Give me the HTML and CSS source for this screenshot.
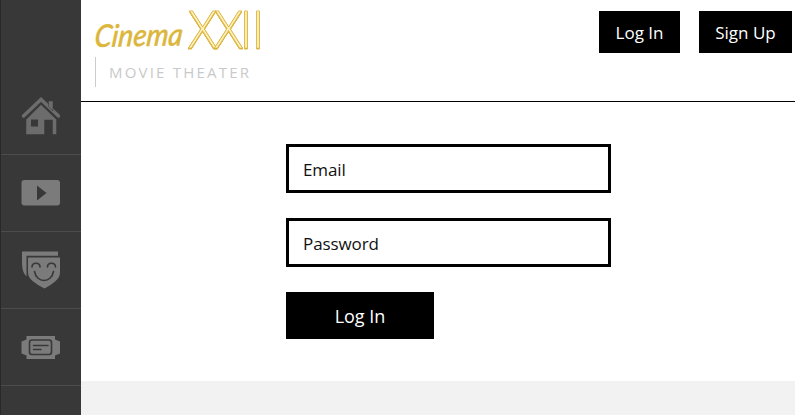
FILE: index.html
```html
<!DOCTYPE html>
<html lang="en">
<head>
<meta charset="utf-8">
<title>Cinema XXII</title>
<link rel="stylesheet" href="styles.css">
</head>
<body>
<nav class="sidebar">
  <a class="nav-item home" aria-label="Home"><svg width="40" height="40" viewBox="0 0 40 40"><path class="roof" d="M2.500 20 20 3.500 37.500 20"/><path class="shape" d="M27.500 5h4.500v10l-4.500-4.500ZM20 8.500l15.500 15v15h-4V24h-8v14.500H5v-15Z"/><path class="hole" d="M10 23.500h7v7h-7z"/></svg></a>
  <a class="nav-item" aria-label="Movies"><svg width="40" height="40" viewBox="0 0 40 40"><rect class="shape" x=".5" y="7" width="38.500" height="25.500" rx="3"/><path class="hole" d="m16 12.500 9.500 7.500-9.500 7.500Z"/></svg></a>
  <a class="nav-item" aria-label="Plays"><svg width="40" height="40" viewBox="-.5 0 40 40"><path class="shape" d="M.500 1.500h36v4.300H5v20.700C1.500 23 .500 18 .500 12Z"/><path class="shape" d="M6.500 7.500h32v15c0 7-7 11-15.500 16-9-5-16.500-9-16.500-16Z"/><path class="detail" d="M10.500 17c0-5 8-5 8 0M26 17c0-5 8-5 8 0M13 21.500c2 12 17 12 19 0"/></svg></a>
  <a class="nav-item" aria-label="Tickets"><svg width="40" height="40" viewBox="0 0 40 40"><path class="shape" d="M5.500 9H34v3.500l5 2v12l-5 2V32H5.500v-3.500l-5-2v-12l5-2Z"/><rect class="detail" x="8.500" y="13" width="22" height="14.500" rx="2.500"/><path class="detail" d="M12.500 18.500h14.500M12.500 22.500h7.500"/></svg></a>
</nav>
<div class="page">
  <header class="header">
    <div class="brand">
      <svg class="logo" width="176" height="50" viewBox="0 0 176 50"><text class="cinema" x="3" y="42" textLength="88" lengthAdjust="spacingAndGlyphs" transform="rotate(-1 3 42) skewX(-7) translate(5 0)">Cinema</text><g class="numeral"><text x="97.500" y="42.500" textLength="28" lengthAdjust="spacingAndGlyphs">X</text><text x="123.500" y="42.500" textLength="28" lengthAdjust="spacingAndGlyphs">X</text><text x="149" y="42.500" textLength="12" lengthAdjust="spacingAndGlyphs">I</text><text x="161" y="42.500" textLength="12" lengthAdjust="spacingAndGlyphs">I</text></g></svg>
      <div class="tagline">MOVIE THEATER</div>
    </div>
    <div class="actions"><button class="button">Log In</button><button class="button signup">Sign Up</button></div>
  </header>
  <form class="form">
    <input class="field" type="email" placeholder="Email" aria-label="Email">
    <input class="field" type="password" placeholder="Password" aria-label="Password">
    <button class="button submit" type="button">Log In</button>
  </form>
  <footer class="footer"></footer>
</div>
</body>
</html>
```
FILE: styles.css
```css
* { box-sizing: border-box; }
body { margin: 0; height: 415px; display: flex; overflow: hidden; background: #fff; font-family: "Open Sans", sans-serif; }
.sidebar { width: 81px; flex: none; padding-top: 78px; background: #383838; border-left: 1px solid #292929; }
.nav-item { height: 77px; display: flex; align-items: center; justify-content: center; border-bottom: 1px solid #4c4c4c; }
.shape { fill: #7b7b7b; }
.home .shape { fill: #6c6c6c; }
.roof { fill: none; stroke: #6c6c6c; stroke-width: 3.5; stroke-linecap: round; }
.home .shape { stroke: #383838; stroke-width: .5; }
.hole { fill: #383838; }
.detail { fill: none; stroke: #383838; stroke-width: 1.6; stroke-linecap: round; }
.page { flex: 1; display: flex; flex-direction: column; }
.header { height: 102px; flex: none; display: flex; justify-content: space-between; border-bottom: 1px solid #000; padding: 5px 3px 0 10px; }
.logo { display: block; overflow: visible; }
.cinema { font: italic 500 31px "Lato", sans-serif; fill: #dcb63a; stroke: #dcb63a; stroke-width: .4; }
.numeral { font: 300 51px "Open Sans", sans-serif; fill: #fff1bd; stroke: #dab43f; stroke-width: .6; filter: drop-shadow(.8px 1px 0 #dab43f) drop-shadow(.6px .8px 0 #dab43f); }
.tagline { margin: 2px 0 0 4px; height: 30px; padding-left: 13px; border-left: 1px solid #ccc; font: 15px/30px "Open Sans", sans-serif; letter-spacing: 2.2px; color: #c9c9c9; }
.actions { display: flex; gap: 19px; padding-top: 6px; }
.button { width: 81px; height: 42px; padding: 0; border: 0; background: #000; color: #fff; font: 17px/44px "Open Sans", sans-serif; }
.signup { width: 93px; }
.form { height: 279px; padding: 42px 0 0 205px; display: flex; flex-direction: column; align-items: flex-start; gap: 25px; }
.field { width: 325px; height: 49px; padding: 1px 14px 0; border: 3px solid #000; border-radius: 0; background: #fff; font: 17px "Open Sans", sans-serif; color: #111; }
.field::placeholder { color: #111; opacity: 1; letter-spacing: -.1px; }
.submit { width: 148px; height: 47px; font-size: 18px; line-height: 49px; }
.footer { flex: 1; background: #f2f2f2; }
```
